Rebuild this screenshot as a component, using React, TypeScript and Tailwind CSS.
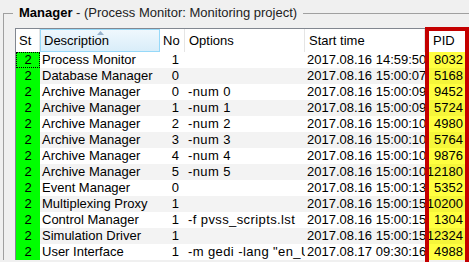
import React from "react";

const rows: [string, string, string, string, string][] = [
  ["Process Monitor", "1", "", "2017.08.16 14:59:50", "8032"],
  ["Database Manager", "0", "", "2017.08.16 15:00:07", "5168"],
  ["Archive Manager", "0", "-num 0", "2017.08.16 15:00:09", "9452"],
  ["Archive Manager", "1", "-num 1", "2017.08.16 15:00:09", "5724"],
  ["Archive Manager", "2", "-num 2", "2017.08.16 15:00:10", "4980"],
  ["Archive Manager", "3", "-num 3", "2017.08.16 15:00:10", "5764"],
  ["Archive Manager", "4", "-num 4", "2017.08.16 15:00:10", "9876"],
  ["Archive Manager", "5", "-num 5", "2017.08.16 15:00:10", "12180"],
  ["Event Manager", "0", "", "2017.08.16 15:00:13", "5352"],
  ["Multiplexing Proxy", "1", "", "2017.08.16 15:00:15", "10200"],
  ["Control Manager", "1", "-f pvss_scripts.lst", "2017.08.16 15:00:15", "1304"],
  ["Simulation Driver", "1", "", "2017.08.16 15:00:15", "12324"],
  ["User Interface", "1", '-m gedi -lang "en_US.utf8"', "2017.08.17 09:30:16", "4988"],
];

export default function App() {
  return (
    <div className="relative w-[469px] h-[262px] overflow-hidden bg-[#f0f0f0] font-['Liberation_Sans',Arial,sans-serif] text-[13px] text-black">
      <fieldset className="mt-[5px] ml-[3px] w-[466px] border-l border-t border-[#a0a0a0] pl-[11px]">
        <legend className="-ml-[2px] px-[6px] leading-[16px] whitespace-nowrap">
          <span className="font-bold">Manager</span>
          <span className="text-[#222]"> - (Process Monitor: Monitoring project)</span>
        </legend>
        <div className="mt-[7px] w-[454px] border-l border-t border-[#828790] bg-white">
          <div className="flex h-[23px] items-center bg-white">
            <div className="w-[24px] h-full flex items-center pl-[3px] border-r border-[#e5e5e5]">St</div>
            <div className="relative w-[120px] h-full flex items-center pl-[3px] border border-[#96d9f9] bg-linear-to-b from-[#eff8fd] to-[#d9edf9]">
              <svg className="absolute left-[56px] top-[1px]" width="7" height="4" viewBox="0 0 7 4">
                <path d="M0 4 L3.5 0 L7 4 Z" fill="#97b2cc" />
              </svg>
              Description
            </div>
            <div className="w-[25px] h-full flex items-center pl-[3px] border-r border-[#e5e5e5]">No</div>
            <div className="w-[120px] h-full flex items-center pl-[4px] border-r border-[#e5e5e5]">Options</div>
            <div className="w-[120px] h-full flex items-center pl-[4px] border-r border-[#e5e5e5]">Start time</div>
            <div className="w-[44px] h-full flex items-center pl-[8px]">PID</div>
          </div>
          {rows.map((r, i) => (
            <div
              key={i}
              className={`flex h-[16px] leading-[16px] whitespace-nowrap ${i % 2 === 0 ? "bg-white" : "bg-[#f3f3f3]"}`}
            >
              <div
                className={`w-[24px] text-center bg-[#00ff00] ${i === 0 ? "outline outline-1 outline-dotted outline-black -outline-offset-1" : ""}`}
              >
                2
              </div>
              <div className="w-[120px] pl-[2px] overflow-hidden">{r[0]}</div>
              <div className="w-[25px] pr-[6px] text-right">{r[1]}</div>
              <div className="w-[120px] pl-[3px] overflow-hidden tracking-[0.4px]">{r[2]}</div>
              <div className="w-[120px] pl-[2px] overflow-hidden">{r[3]}</div>
              <div className={`w-[44px] pr-[6px] text-right ${i % 2 === 0 ? "bg-[#ffff40]" : "bg-[#f6f63a]"}`}>{r[4]}</div>
            </div>
          ))}
        </div>
      </fieldset>
      <div className="absolute left-[425px] top-[27px] w-[44px] h-[260px] border-4 border-[#c40000]" />
    </div>
  );
}
